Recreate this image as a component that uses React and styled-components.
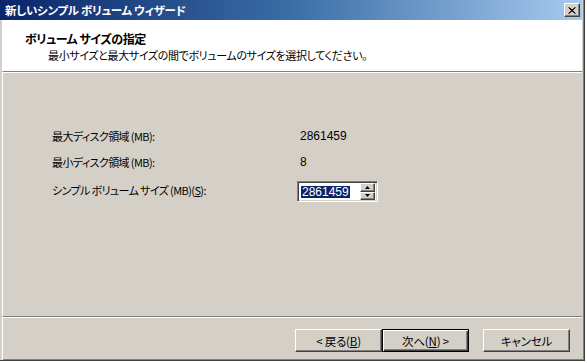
import React from "react";
import styled, { createGlobalStyle } from "styled-components";

const Global = createGlobalStyle`
  html, body { margin: 0; padding: 0; background: #ffffff; }
  body { font-family: "Noto Sans CJK JP", "Liberation Sans", sans-serif; }
`;

const FONT = `"Noto Sans CJK JP", "Liberation Sans", sans-serif`;

const Page = styled.div`
  width: 587px;
  height: 363px;
  overflow: hidden;
  background: #ffffff;
`;

const Window = styled.div`
  width: 585px;
  height: 361px;
  box-sizing: border-box;
  display: flex;
  flex-direction: column;
  background: #d4d0c8;
  border-right: 1px solid #404040;
  border-bottom: 1px solid #404040;
  box-shadow: inset -1px -1px 0 #808080;
  font-family: ${FONT};
  font-size: 11px;
  color: #000;
  font-feature-settings: "palt";
`;

const TitleBar = styled.div`
  height: 20px;
  margin-right: 2px;
  flex: none;
  display: flex;
  align-items: center;
  justify-content: space-between;
  padding: 0 2px 0 5px;
  background: linear-gradient(to right, #0a246a 0%, #3a6ea5 50%, #a6caf0 100%);
`;

const TitleText = styled.span`
  color: #fff;
  font-weight: bold;
  font-size: 11.5px;
  letter-spacing: -0.3px;
`;

const CloseButton = styled.div`
  width: 16px;
  height: 14px;
  box-sizing: border-box;
  background: #d4d0c8;
  border-top: 1px solid #fff;
  border-left: 1px solid #fff;
  border-right: 1px solid #404040;
  border-bottom: 1px solid #404040;
  box-shadow: inset -1px -1px 0 #808080;
  display: flex;
  align-items: center;
  justify-content: center;
`;

const Inner = styled.div`
  flex: 1;
  display: flex;
  flex-direction: column;
  border-left: 2px solid #d4d0c8;
  margin-right: 2px;
`;

const Header = styled.div`
  background: #fff;
  height: 52px;
  flex: none;
  padding: 11px 0 0 22px;
  box-sizing: border-box;
  border-left: 1px solid #fff;
  border-bottom: 1px solid #808080;
  box-shadow: 0 1px 0 #fff;
`;

const HeaderTitle = styled.div`
  font-weight: bold;
  font-size: 12px;
  line-height: 16px;
  letter-spacing: -0.5px;
`;

const HeaderSub = styled.div`
  line-height: 16px;
  padding-left: 23px;
  letter-spacing: -0.35px;
`;

const Body = styled.div`
  flex: 1;
  border-left: 1px solid #fff;
  padding: 57px 0 0 49px;
  box-sizing: border-box;
`;

const Grid = styled.div`
  display: grid;
  grid-template-columns: 248px auto;
  row-gap: 12px;
  align-items: start;
`;

const Label = styled.div`
  line-height: 14px;
  white-space: nowrap;
  letter-spacing: -0.6px;
`;

const Value = styled.div`
  line-height: 14px;
  font-size: 12px;
  font-family: "Liberation Sans", sans-serif;
`;

const SpinLabel = styled(Label)`
  padding-top: 2px;
`;

const Spin = styled.div`
  margin-left: -3px;
  width: 81px;
  height: 21px;
  box-sizing: border-box;
  display: flex;
  align-items: center;
  background: #fff;
  border-top: 1px solid #808080;
  border-left: 1px solid #808080;
  border-right: 1px solid #fff;
  border-bottom: 1px solid #fff;
  box-shadow: inset 1px 1px 0 #404040, inset -1px -1px 0 #d4d0c8;
  padding: 2px 2px 2px 3px;
`;

const Selected = styled.span`
  background: #0a246a;
  color: #fff;
  font-family: "Liberation Sans", sans-serif;
  font-size: 12px;
  line-height: 12px;
  padding: 0 1px;
`;

const SpinButtons = styled.div`
  margin-left: auto;
  display: flex;
  flex-direction: column;
  width: 15px;
  height: 17px;
`;

const SpinBtn = styled.div`
  flex: 1;
  box-sizing: border-box;
  background: #d4d0c8;
  border-top: 1px solid #fff;
  border-left: 1px solid #fff;
  border-right: 1px solid #404040;
  border-bottom: 1px solid #404040;
  box-shadow: inset -1px -1px 0 #808080;
  display: flex;
  align-items: center;
  justify-content: center;
`;

const Footer = styled.div`
  flex: none;
  height: 44px;
  box-sizing: border-box;
  border-top: 1px solid #808080;
  box-shadow: inset 0 1px 0 #fff;
  border-left: 1px solid #fff;
  display: flex;
  align-items: flex-start;
  justify-content: flex-end;
  padding: 12px 12px 0 0;
`;

const Button = styled.div`
  width: ${(p) => p.$w}px;
  height: 23px;
  box-sizing: border-box;
  margin-left: ${(p) => p.$gap}px;
  background: #d4d0c8;
  display: flex;
  align-items: center;
  justify-content: center;
  font-size: 11.5px;
  line-height: 14px;
  letter-spacing: -0.2px;
  border-top: 1px solid ${(p) => (p.$default ? "#000" : "#fff")};
  border-left: 1px solid ${(p) => (p.$default ? "#000" : "#fff")};
  border-right: 1px solid ${(p) => (p.$default ? "#000" : "#404040")};
  border-bottom: 1px solid ${(p) => (p.$default ? "#000" : "#404040")};
  box-shadow: ${(p) =>
    p.$default
      ? "inset 1px 1px 0 #fff, inset -1px -1px 0 #404040, inset -2px -2px 0 #808080"
      : "inset -1px -1px 0 #808080"};
`;

const U = styled.span`
  text-decoration: underline;
`;

const Triangle = ({ up }) => (
  <svg width="5" height="3" viewBox="0 0 5 3">
    <path d={up ? "M2.5 0 L5 3 L0 3 Z" : "M0 0 L5 0 L2.5 3 Z"} fill="#000" />
  </svg>
);

export default function App() {
  return (
    <Page>
      <Global />
      <Window>
        <TitleBar>
          <TitleText>新しいシンプル ボリューム ウィザード</TitleText>
          <CloseButton>
            <svg width="8" height="7" viewBox="0 0 8 7">
              <path d="M0.5 0.5 L7 6.5 M1.5 0.5 L7.5 6.5 M7 0.5 L0.5 6.5 M7.5 0.5 L1 6.5" stroke="#000" strokeWidth="1" />
            </svg>
          </CloseButton>
        </TitleBar>
        <Inner>
          <Header>
            <HeaderTitle>ボリューム サイズの指定</HeaderTitle>
            <HeaderSub>最小サイズと最大サイズの間でボリュームのサイズを選択してください。</HeaderSub>
          </Header>
          <Body>
            <Grid>
              <Label>最大ディスク領域 (MB):</Label>
              <Value>2861459</Value>
              <Label>最小ディスク領域 (MB):</Label>
              <Value>8</Value>
              <SpinLabel>
                シンプル ボリューム サイズ (MB)(<U>S</U>):
              </SpinLabel>
              <Spin>
                <Selected>2861459</Selected>
                <SpinButtons>
                  <SpinBtn>
                    <Triangle up />
                  </SpinBtn>
                  <SpinBtn>
                    <Triangle />
                  </SpinBtn>
                </SpinButtons>
              </Spin>
            </Grid>
          </Body>
          <Footer>
            <Button $w={87} $gap={0}>
              &lt; 戻る(<U>B</U>)
            </Button>
            <Button $w={87} $gap={0} $default>
              次へ(<U>N</U>) &gt;
            </Button>
            <Button $w={87} $gap={14}>
              キャンセル
            </Button>
          </Footer>
        </Inner>
      </Window>
    </Page>
  );
}
